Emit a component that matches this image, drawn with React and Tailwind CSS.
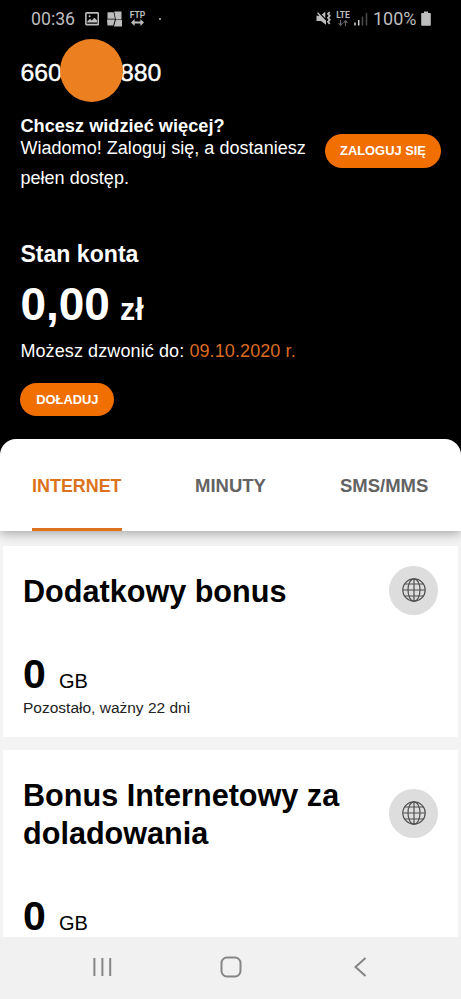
import React, { useState } from "react";

const tabs = ["INTERNET", "MINUTY", "SMS/MMS"];

function StatusBar() {
  return (
    <div className="flex h-[39px] shrink-0 items-start justify-between pl-[31px] pr-[30px] pt-[9px] font-[Roboto,sans-serif] text-[17.7px] leading-5 text-[#bdbdbd]">
      <div className="flex items-start">
        <span className="w-[54px]">00:36</span>
        {/* screenshot saved */}
        <svg className="mt-[3px] h-[14px] w-[14px]" viewBox="0 0 14 14">
          <rect x="0.9" y="0.9" width="12.4" height="11.7" rx="0.6" fill="none" stroke="currentColor" strokeWidth="1.6" />
          <path d="M2.3 10.6 V9.4 L5 6.8 L6.8 8.6 L9.4 5.8 L12 8.2 V10.6 Z" fill="currentColor" />
          <circle cx="4.6" cy="4.2" r="1" fill="currentColor" />
        </svg>
        {/* tile app */}
        <svg className="ml-2 mt-[2px] h-4 w-[15px]" viewBox="0 0 15 16">
          <path d="M0.5 1.2 H6.6 L8 7.8 H0.5 Z M7.2 0.6 H14.5 V8.5 H8.8 Z M0 8.4 H7.9 L6.3 14.6 H0.5 Z M8.8 9.1 H15 V15.5 H7 Z" fill="currentColor" />
        </svg>
        <div className="ml-2 mt-[2px] flex w-[15px] flex-col items-center">
          <span className="text-[8.5px] leading-[8px] font-bold">FTP</span>
          <svg className="h-[7px] w-[13px]" viewBox="0 0 13 7">
            <path d="M0 3.5 L3.6 0 V2.5 H9.4 V0 L13 3.5 L9.4 7 V4.5 H3.6 V7 Z" fill="currentColor" />
          </svg>
        </div>
        <span className="ml-[14px] mt-[9px] h-[2px] w-[2px] rounded-full bg-[#bdbdbd]" />
      </div>
      <div className="flex items-start">
        {/* muted, vibrate */}
        <svg className="mt-[2px] h-[15px] w-4" viewBox="0 0 16 15">
          <path d="M0.5 4.8 H3.4 L1 2.3 L2 1.3 L10 9.6 V13.8 L5 10 H0.5 Z M5.8 3.6 L9.3 0.8 V7.2 Z" fill="currentColor" />
          <path d="M13.7 1 L12 2.8 L13.7 4.8 L12 6.8 L13.7 8.8 L12 10.8 L13.7 13" fill="none" stroke="currentColor" strokeWidth="1.8" />
        </svg>
        <div className="ml-[4px] mt-[2px] flex w-[14px] flex-col items-center">
          <span className="text-[8.5px] leading-[8px] font-bold">LTE</span>
          <svg className="mt-[1px] h-[6px] w-[10px]" viewBox="0 0 10 6">
            <path d="M2.5 0 V5 M0.5 3.2 L2.5 5.3 L4.5 3.2 M7.5 6 V1 M5.5 2.8 L7.5 0.7 L9.5 2.8" fill="none" stroke="#666" strokeWidth="1.1" />
          </svg>
        </div>
        <svg className="ml-1 mt-[3px] h-[14px] w-[14px]" viewBox="0 0 14 14">
          <path d="M1 10.5 V13.5 M4.7 8 V13.5" stroke="#d0d0d0" strokeWidth="1.5" />
          <path d="M8.5 4.5 V13.5 M12.5 1 V13.5" stroke="#4b4b4b" strokeWidth="1.5" />
        </svg>
        <span className="ml-[5px] w-12 text-[18px]">100%</span>
        <svg className="mt-[2px] h-[15px] w-[10px]" viewBox="0 0 10 15">
          <path d="M3 0.5 H7 V2 H9 Q9.8 2 9.8 2.8 V14 Q9.8 14.8 9 14.8 H1 Q0.2 14.8 0.2 14 V2.8 Q0.2 2 1 2 H3 Z" fill="currentColor" />
        </svg>
      </div>
    </div>
  );
}

function GlobeIcon() {
  return (
    <div className="flex h-[49px] w-[49px] shrink-0 items-center justify-center rounded-full bg-[#dddddd]">
      <svg className="h-6 w-6" viewBox="0 0 24 24" fill="none" stroke="#505050" strokeWidth="1.2">
        <circle cx="12" cy="12" r="11.2" />
        <ellipse cx="12" cy="12" rx="6" ry="11.2" />
        <path d="M12 1 V23 M1 12 H23 M3 6 H21 M3 18 H21" />
      </svg>
    </div>
  );
}

function BonusCard({ title, amount, note }) {
  return (
    <div className="bg-white pl-5 pr-[20px] pt-[19px] pb-[18px] text-black">
      <div className="flex items-center justify-between">
        <h2 className="w-[325px] pt-[7px] pb-[5px] text-[30.6px] leading-[38px] font-bold">{title}</h2>
        <GlobeIcon />
      </div>
      <div className="mt-[39px] flex h-10 items-baseline">
        <span className="w-9 text-[41px] leading-10 font-bold">{amount}</span>
        <span className="text-[20px] leading-6">GB</span>
      </div>
      {note && <p className="mt-[3px] text-[15.5px] leading-[22px] text-[#222]">{note}</p>}
    </div>
  );
}

function App() {
  const [active, setActive] = useState("INTERNET");

  return (
    <div className="flex h-[999px] w-full flex-col overflow-hidden bg-black font-['Liberation_Sans',Arial,sans-serif] text-white">
      <StatusBar />

      {/* Account header */}
      <div className="h-[400px] shrink-0 pl-[20.4px] pr-[20px]">
        <div className="flex h-[63px] items-center text-[24.8px] leading-8">
          <span className="w-[39.6px] pt-[5px] [-webkit-text-stroke:0.4px_white]">660</span>
          <span className="z-10 h-[63px] w-[63px] rounded-full bg-[#ec8020]" />
          <span className="-ml-[3px] pt-[5px] [-webkit-text-stroke:0.4px_white]">880</span>
        </div>

        <div className="mt-4 flex items-start justify-between">
          <div>
            <p className="text-[18.2px] leading-4 font-bold">Chcesz widzieć więcej?</p>
            <p className="-mt-px w-[290px] text-[18px] leading-[30px] tracking-[0.04px]">
              Wiadomo! Zaloguj się, a dostaniesz pełen dostęp.
            </p>
          </div>
          <button className="mt-4 h-[34px] w-[116px] shrink-0 rounded-full bg-[#f16e00] text-[12.9px] font-bold">
            ZALOGUJ SIĘ
          </button>
        </div>

        <h1 className="mt-[46px] text-[23.1px] leading-[30px] font-bold">Stan konta</h1>
        <p className="mt-3 h-[46px] text-[46px] leading-[46px] font-bold">
          0,00<span className="ml-[10px] text-[30.5px]">zł</span>
        </p>
        <p className="mt-3 text-[18px] leading-6 tracking-[0.1px]">
          Możesz dzwonić do: <span className="text-[#dd6b20]">09.10.2020 r.</span>
        </p>
        <button className="mt-5 block h-[33px] w-[94px] rounded-full bg-[#f16e00] text-[12.9px] font-bold">
          DOŁADUJ
        </button>
      </div>

      {/* Tabs */}
      <div className="z-10 grid h-[92px] shrink-0 grid-cols-3 rounded-t-2xl bg-white shadow-[0_2px_12px_rgba(0,0,0,0.35)]">
        {tabs.map((tab) => (
          <button
            key={tab}
            onClick={() => setActive(tab)}
            className={
              active === tab
                ? "mx-auto border-b-3 border-[#dc721c] pt-[5px] text-[17.9px] font-bold text-[#dc721c]"
                : "mx-auto pt-px text-[18.5px] font-bold text-[#636363]"
            }
          >
            {tab}
          </button>
        ))}
      </div>

      {/* Bonus list */}
      <div className="flex min-h-0 flex-1 flex-col gap-[13px] overflow-hidden bg-[#f3f3f3] px-[3px] pt-[15px] *:shrink-0">
        <BonusCard title="Dodatkowy bonus" amount="0" note="Pozostało, ważny 22 dni" />
        <BonusCard title="Bonus Internetowy za doladowania" amount="0" />
      </div>

      {/* Navigation bar */}
      <div className="flex h-[62px] shrink-0 items-center justify-between bg-[#f1f1f1] pb-[2px] pl-[92px] pr-[91px] text-[#858585]">
        <svg className="h-5 w-5" viewBox="0 0 20 20" fill="none" stroke="currentColor" strokeWidth="2">
          <path d="M2.4 1 V19 M10.4 1 V19 M18.2 1 V19" />
        </svg>
        <svg className="h-[22px] w-[22px]" viewBox="0 0 22 22" fill="none" stroke="currentColor" strokeWidth="2">
          <rect x="1.5" y="1.5" width="19" height="19" rx="5.5" />
        </svg>
        <svg className="h-5 w-5" viewBox="0 0 20 20" fill="none" stroke="currentColor" strokeWidth="2">
          <path d="M15.5 1 L5.5 10 L15.5 19" />
        </svg>
      </div>
    </div>
  );
}

export default App;
